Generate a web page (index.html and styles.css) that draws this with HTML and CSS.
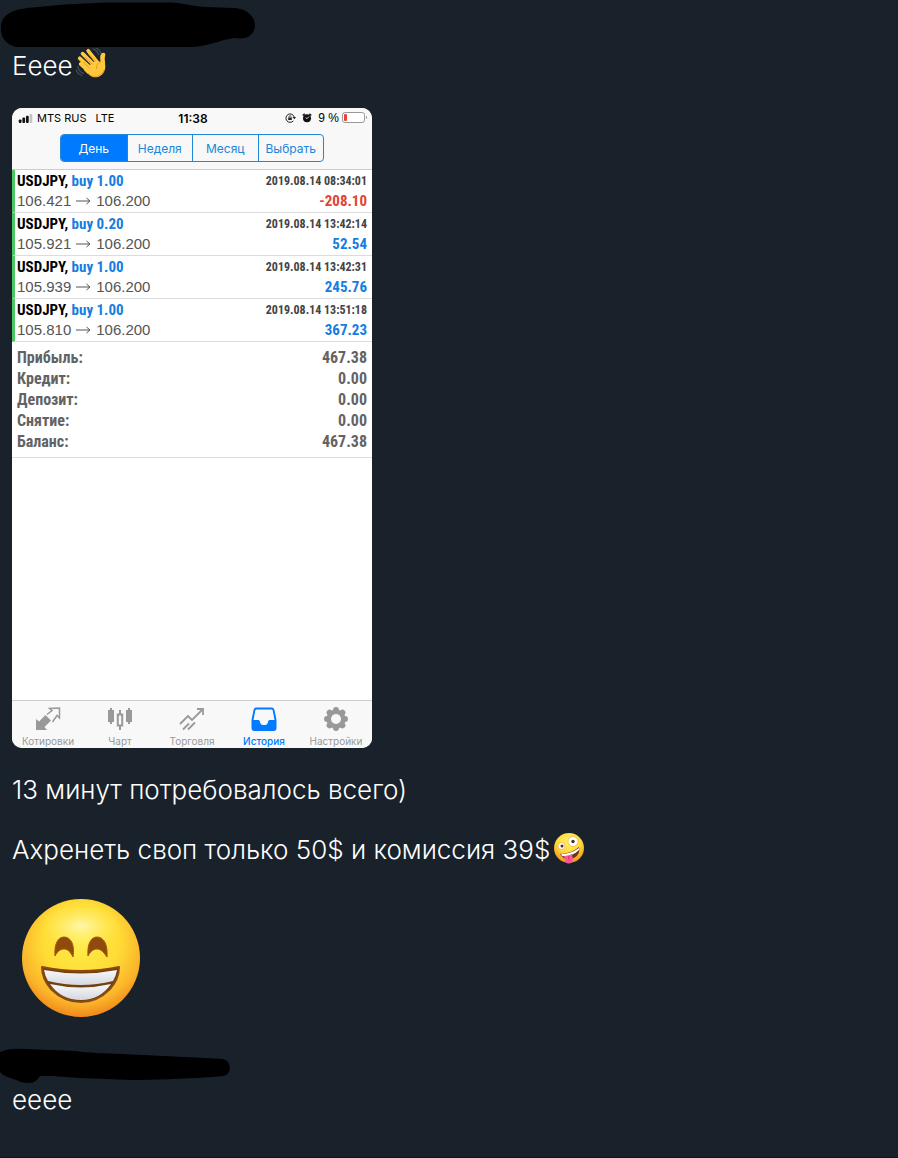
FILE: index.html
```html
<!DOCTYPE html>
<html lang="ru">
<head>
  <meta charset="UTF-8">
  <title>Чат</title>
  <meta name="viewport" content="width=device-width, initial-scale=1.0">
  <link rel="stylesheet" href="styles.css">
</head>
<body>
  <main class="chat">
    <svg class="marker" width="256" height="48" viewBox="0 0 256 48" aria-hidden="true">
      <path d="M16 47C5 44 0 37 1 25C2 15 12 10 27 8C55 5 85 3 110 2.5H170C184 3 191 6 205 7L235 8C247 9 255 16 255 26C254 36 246 40 234 38C220 40 209 46 192 47Z" fill="#000"/>
    </svg>
    <p class="message">Eeee<svg class="emoji" viewBox="0 0 34 34" role="img" aria-label="машет рукой">
        <g fill="none" stroke="#465058" stroke-width="1.3" stroke-linecap="round">
          <path d="M18 1C21 2 23 4 24 7M21 0C24 1 26 4 27 6M2 20C3 24 5 26 8 27M0 23C1 26 3 28 6 29"/>
        </g>
        <g fill="none" stroke="#ffc83d" stroke-width="4" stroke-linecap="round">
          <path d="M5 17L13 24M4 11L16 22M7 6L20 19M13 3L24 17"/>
        </g>
        <path d="M10 21L22 13L26 15C26 12 25 8 27 6C29 4 32 5 31 8C30 11 31 14 31 18C32 24 28 30 22 31C17 32 12 27 8 23Z" fill="#ffc83d"/>
        <path d="M8 15L14 21M10 10L17 17M14 7L21 14M26 15C23 16 21 19 22 22M13 27C18 33 27 31 30 23" fill="none" stroke="#e99a20" stroke-linecap="round"/>
      </svg></p>

    <section class="phone" aria-label="История сделок">
      <header class="phone-header">
        <div class="status">
          <div class="status-left">
            <svg width="16" height="9" viewBox="0 0 16 10" aria-hidden="true">
              <g fill="#111"><rect y="6" width="3" height="4" rx="1"/><rect x="4" y="4" width="3" height="6" rx="1"/><rect x="8" y="2" width="3" height="8" rx="1"/></g>
              <rect x="12" width="3" height="10" rx="1" fill="#c4c4c6"/>
            </svg>
            <span>MTS RUS</span>
            <span class="network">LTE</span>
          </div>
          <span class="time">11:38</span>
          <div class="status-right">
            <svg width="11" height="10" viewBox="0 0 11 10" aria-hidden="true">
              <path d="M8.4 7.8A4.2 4.2 0 1 1 9.2 4" fill="none" stroke="#222"/>
              <path d="M7.5 4H11L9.4 6.2Z" fill="#222"/>
              <path d="M3.2 4.6H6.8V7H3.2Z" fill="#222"/>
              <path d="M4 4.6V3.6A1 1 0 0 1 6 3.6V4.6" fill="none" stroke="#222" stroke-width=".7"/>
            </svg>
            <svg class="alarm" width="10" height="10" viewBox="0 0 10 10" aria-hidden="true">
              <circle cx="5" cy="5.2" r="4" fill="#111"/>
              <path d="M.7 2.5L2.7.8M9.3 2.5L7.3.8" stroke="#111" stroke-width="1.4"/>
              <path d="M5 5.7L7 3.5M5 5.7L3.6 4.6" stroke="#fff" stroke-width=".8"/>
            </svg>
            <span>9 %</span>
            <svg width="26" height="12" viewBox="0 0 26 12" aria-hidden="true">
              <rect x=".5" y=".5" width="22" height="10" rx="2.5" fill="#fff" stroke="#999"/>
              <rect x="2" y="2" width="3" height="7" rx="1" fill="#e64432"/>
              <path d="M24 4C25.5 4.5 25.5 6.5 24 7Z" fill="#999"/>
            </svg>
          </div>
        </div>
        <div class="periods">
          <button type="button" class="active">День</button>
          <button type="button">Неделя</button>
          <button type="button">Месяц</button>
          <button type="button">Выбрать</button>
        </div>
      </header>

      <ul class="deals">
        <li>
          <div class="deal-line"><b>USDJPY, <span class="blue">buy 1.00</span></b><time>2019.08.14 08:34:01</time></div>
          <div class="deal-line"><span class="price">106.421 <svg class="arrow" viewBox="0 0 15 8"><path d="M0 4H14M10.5 1L14 4L10.5 7"/></svg> 106.200</span><b class="red">-208.10</b></div>
        </li>
        <li>
          <div class="deal-line"><b>USDJPY, <span class="blue">buy 0.20</span></b><time>2019.08.14 13:42:14</time></div>
          <div class="deal-line"><span class="price">105.921 <svg class="arrow" viewBox="0 0 15 8"><path d="M0 4H14M10.5 1L14 4L10.5 7"/></svg> 106.200</span><b class="blue">52.54</b></div>
        </li>
        <li>
          <div class="deal-line"><b>USDJPY, <span class="blue">buy 1.00</span></b><time>2019.08.14 13:42:31</time></div>
          <div class="deal-line"><span class="price">105.939 <svg class="arrow" viewBox="0 0 15 8"><path d="M0 4H14M10.5 1L14 4L10.5 7"/></svg> 106.200</span><b class="blue">245.76</b></div>
        </li>
        <li>
          <div class="deal-line"><b>USDJPY, <span class="blue">buy 1.00</span></b><time>2019.08.14 13:51:18</time></div>
          <div class="deal-line"><span class="price">105.810 <svg class="arrow" viewBox="0 0 15 8"><path d="M0 4H14M10.5 1L14 4L10.5 7"/></svg> 106.200</span><b class="blue">367.23</b></div>
        </li>
      </ul>

      <dl class="totals">
        <div><dt>Прибыль:</dt><dd>467.38</dd></div>
        <div><dt>Кредит:</dt><dd>0.00</dd></div>
        <div><dt>Депозит:</dt><dd>0.00</dd></div>
        <div><dt>Снятие:</dt><dd>0.00</dd></div>
        <div><dt>Баланс:</dt><dd>467.38</dd></div>
      </dl>

      <nav class="tabs">
        <a href="#quotes">
          <svg viewBox="0 0 26 26" aria-hidden="true">
            <path d="M1 24V13L4 15.5L10.5 9L16 14.5L9.5 21L12 24Z" fill="currentColor"/>
            <path d="M12 8.5L17 4.5L14.5 2.5L24.5 2V12L22 9.5L17.5 16" fill="none" stroke="currentColor" stroke-width="1.5"/>
          </svg>
          <span>Котировки</span>
        </a>
        <a href="#chart">
          <svg viewBox="0 0 26 26" aria-hidden="true">
            <path d="M1 4H3V2H5V4H7V16H5V18H3V16H1ZM19 4H21V2H23V4H25V16H23V18H21V16H19Z" fill="currentColor"/>
            <path d="M10.8 8.5H15.2V19.5H10.8ZM13 4V8M13 20V24" fill="none" stroke="currentColor" stroke-width="2"/>
          </svg>
          <span>Чарт</span>
        </a>
        <a href="#trade">
          <svg viewBox="0 0 26 26" aria-hidden="true">
            <path d="M1 18L9 10L13 14L23.5 3.5M18 3H24V9M4 23.5L10 17.5M9 23.5L16 16.5" fill="none" stroke="currentColor" stroke-width="1.8"/>
          </svg>
          <span>Торговля</span>
        </a>
        <a href="#history" class="active">
          <svg viewBox="0 0 26 26" aria-hidden="true">
            <path fill-rule="evenodd" d="M5 1.5H21Q23 1.5 23.5 4L25.5 14V22Q25.5 25 22.5 25H3.5Q.5 25 .5 22V14L2.5 4Q3 1.5 5 1.5ZM5.5 3.5Q4.5 3.5 4.3 4.5L2.5 14H7.5Q8.7 14 9 16Q9.5 19 12 19H14Q16.5 19 17 16Q17.3 14 18.5 14H23.5L21.7 4.5Q21.5 3.5 20.5 3.5Z" fill="currentColor"/>
          </svg>
          <span>История</span>
        </a>
        <a href="#settings">
          <svg viewBox="0 0 26 26" aria-hidden="true">
            <g stroke="currentColor" stroke-width="6" stroke-linecap="round">
              <path d="M13 4V22M4 13H22M6.6 6.6L19.4 19.4M19.4 6.6L6.6 19.4"/>
            </g>
            <circle cx="13" cy="13" r="9.5" fill="currentColor"/>
            <circle cx="13" cy="13" r="5" fill="#f8f8f8"/>
          </svg>
          <span>Настройки</span>
        </a>
      </nav>
    </section>

    <p class="message">13 минут потребовалось всего)</p>
    <p class="message">Ахренеть своп только 50$ и комиссия 39$<svg class="emoji" viewBox="0 0 32 32" role="img" aria-label="дурачится">
        <defs>
          <radialGradient id="face" cx="50%" cy="28%" r="72%">
            <stop offset="0" stop-color="#fff16a"/>
            <stop offset=".55" stop-color="#ffd83b"/>
            <stop offset="1" stop-color="#f28e1c"/>
          </radialGradient>
        </defs>
        <circle cx="16" cy="16" r="15" fill="url(#face)"/>
        <circle cx="20" cy="9.5" r="5" fill="#fff" stroke="#dfa52b" stroke-width=".6"/>
        <circle cx="8.5" cy="14" r="3.5" fill="#fff" stroke="#dfa52b" stroke-width=".6"/>
        <circle cx="20" cy="9.5" r="1.7" fill="#503014"/>
        <circle cx="9" cy="14" r="1.5" fill="#503014"/>
        <path d="M7 22Q18 22 26 15Q28 22 21 26Q12 30 7 22Z" fill="#67361b"/>
        <path d="M8 22Q18 22 26 16L26 18Q19 25 9 24Z" fill="#fff"/>
        <path d="M11 24Q15 24 19 22L20 28Q19 32 15 31.5Q12 31 12 28Z" fill="#f9589b"/>
        <path d="M15.5 24L16 28" stroke="#d73476"/>
      </svg></p>

    <svg class="sticker" viewBox="0 0 120 120" role="img" aria-label="улыбка">
      <defs>
        <radialGradient id="big-face" cx="50%" cy="36%" r="65%">
          <stop offset="0" stop-color="#ffec4a"/>
          <stop offset=".5" stop-color="#ffdc35"/>
          <stop offset=".8" stop-color="#fbb52b"/>
          <stop offset="1" stop-color="#ee8519"/>
        </radialGradient>
        <radialGradient id="shine">
          <stop offset="0" stop-color="#fffbc8" stop-opacity=".8"/>
          <stop offset="1" stop-color="#fff15d" stop-opacity="0"/>
        </radialGradient>
        <linearGradient id="teeth" x1="0" y1="0" x2="0" y2="1">
          <stop offset="0" stop-color="#f8f8fa"/>
          <stop offset="1" stop-color="#d4d8df"/>
        </linearGradient>
      </defs>
      <circle cx="60" cy="60" r="59" fill="url(#big-face)"/>
      <ellipse cx="60" cy="28" rx="42" ry="24" fill="url(#shine)"/>
      <path d="M34 58C33 46 37 39 43 39C50 39 54 47 52 59C49 53 46 51 43 51C39 51 36 54 34 58ZM67 58C66 46 70 39 76 39C83 39 87 47 86 59C82 53 79 51 76 51C72 51 69 54 67 58Z" fill="#8e4b0c" stroke="#a35b0b"/>
      <path d="M21 69Q60 77 98 69Q98 81 89 91Q76 104 60 104Q43 104 30 91Q21 81 21 69Z" fill="#74400f" stroke="#8b4a10" stroke-width="2" stroke-linejoin="round"/>
      <path d="M23 72Q60 79 96 72Q95 78 92 83Q60 91 27 83Q24 78 23 72Z" fill="url(#teeth)"/>
      <path d="M29 86Q60 93 90 86Q79 102 60 102Q40 102 29 86Z" fill="url(#teeth)"/>
    </svg>

    <svg class="marker marker-last" width="232" height="36" viewBox="0 0 232 36" aria-hidden="true">
      <path d="M0 4C7 1 15 0 25 1L76 3C86 5 106 5 122 6L185 9L223 11C229 12 231 19 229 24C226 29 222 28 212 29C182 31 151 32 132 32L80 30L52 28L40 28C37 32 35 35 28 35C20 35 18 32 13 31C8 29 3 28 0 24Z" fill="#000"/>
    </svg>
    <p class="message">eeee</p>
  </main>
</body>
</html>
```
FILE: styles.css
```css
:root {
  --bg: #19222b;
  --blue: #007aff;
  --outline: #2086d8;
  --bar: #f8f8f8;
  --line: #dcdcdc;
  --gray: #999;
}

* {
  margin: 0;
  padding: 0;
  box-sizing: border-box;
}

body {
  background: var(--bg);
  color: #fff;
  font-family: Inter, sans-serif;
}

svg {
  display: block;
  flex-shrink: 0;
}

/* Conversation */
.chat {
  display: flex;
  flex-direction: column;
  align-items: flex-start;
  min-height: 100vh;
  padding: 0 12px;
  border-bottom: 1px solid #10151c;
}
.marker {
  margin-left: -12px;
}
.message {
  display: flex;
  align-items: flex-start;
  font-size: 26px;
  font-weight: 350;
  line-height: 36px;
  margin-bottom: 24px;
}
.emoji {
  width: 32px;
  height: 32px;
  margin-left: 3px;
}
.sticker {
  width: 120px;
  height: 120px;
  margin: 6px 0 30px 9px;
}
.marker-last {
  margin-bottom: -2px;
}

/* Shared phone screen */
.phone {
  display: flex;
  flex-direction: column;
  width: 100%;
  max-width: 360px;
  min-height: 640px;
  margin-bottom: 24px;
  border-radius: 10px;
  overflow: hidden;
  background: #fff;
  color: #000;
}
.phone-header {
  padding-bottom: 7px;
  background: var(--bar);
  border-bottom: 1px solid #ccc;
}
.status {
  display: grid;
  grid-template-columns: 1fr auto 1fr;
  align-items: center;
  height: 20px;
  padding: 0 4px 0 6px;
  font-size: 12px;
}
.status-left,
.status-right {
  display: flex;
  align-items: center;
  gap: 3px;
}
.status-left {
  font-size: 11px;
}
.status-right span {
  font-family: "Liberation Sans", sans-serif;
}
.status-right {
  justify-content: flex-end;
}
.network {
  margin-left: 6px;
}
.alarm {
  margin: 0 3px;
}
.time {
  font-weight: 600;
}
.periods {
  display: grid;
  grid-template-columns: repeat(4, 1fr);
  height: 28px;
  margin: 6px 48px 0;
  border: 1px solid var(--outline);
  border-radius: 4px;
  overflow: hidden;
}
.periods button {
  border: 0;
  border-left: 1px solid var(--outline);
  background: transparent;
  color: var(--outline);
  font: 12px Inter, sans-serif;
}
.periods .active {
  border-left: 0;
  background: var(--blue);
  color: #fff;
}

/* Deals */
.deals {
  list-style: none;
}
.deals li {
  height: 43px;
  padding: 1px 5px 0 2px;
  border-left: 3px solid #4cc764;
  border-bottom: 1px solid var(--line);
}
.deal-line {
  display: flex;
  justify-content: space-between;
  align-items: center;
  font: 15px/20px "Liberation Sans Narrow", "Roboto Condensed", "Liberation Sans", sans-serif;
}
.deal-line time {
  color: #444;
  font-size: 12px;
  font-weight: bold;
}
.price {
  display: flex;
  align-items: center;
  gap: 5px;
  color: #555;
  font-family: "Liberation Sans", sans-serif;
}
.arrow {
  width: 15px;
  height: 8px;
  fill: none;
  stroke: #555;
}
.blue {
  color: #147de0;
}
.red {
  color: #e04432;
}
.totals {
  padding: 5px;
  border-bottom: 1px solid var(--line);
  color: #636363;
  font: bold 16px/21px "Liberation Sans Narrow", "Roboto Condensed", "Liberation Sans", sans-serif;
}
.totals div {
  display: flex;
  justify-content: space-between;
}

/* Bottom navigation */
.tabs {
  display: grid;
  grid-template-columns: repeat(5, 1fr);
  height: 48px;
  margin-top: auto;
  padding-top: 5px;
  background: var(--bar);
  border-top: 1px solid #ccc;
}
.tabs a {
  display: flex;
  flex-direction: column;
  align-items: center;
  gap: 3px;
  color: var(--gray);
  font-size: 10px;
  line-height: 12px;
  text-decoration: none;
}
.tabs svg {
  width: 26px;
  height: 26px;
}
.tabs .active {
  color: var(--blue);
  font-weight: 500;
}
```
